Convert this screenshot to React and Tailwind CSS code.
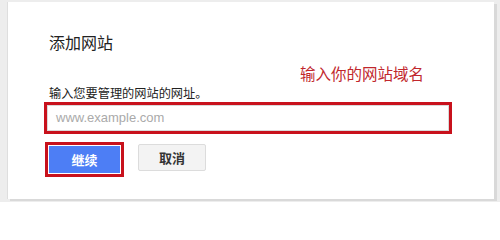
export default function App() {
  return (
    <div className="w-[500px] h-[202px] bg-[#ededed] pt-[2px] pl-[7px] font-['Noto_Sans_CJK_SC','Noto_Sans',sans-serif] overflow-hidden">
      <div className="relative w-[487px] h-[197px] bg-white border-l border-[#dedede] shadow-[3px_2px_0_#d9d9d9] px-[41px] pt-[30px]">
        <h1 className="text-[16px] leading-[20px] text-[#222] font-normal">添加网站</h1>
        <div className="absolute left-[292px] top-[62px] text-[15.5px] leading-[18px] text-[#c1272d]">
          输入你的网站域名
        </div>
        <div className="mt-[33px] text-[12.2px] leading-[16px] text-[#222]">输入您要管理的网站的网址。</div>
        <div className="mt-px -ml-[5px] w-[408px] border-[3px] border-[#c8111c] bg-white">
          <div className="h-[26px] border border-[#d9d9d9] pl-[8px] flex items-center text-[13px] text-[#aaaaaa] font-['Liberation_Sans',sans-serif]">
            www.example.com
          </div>
        </div>
        <div className="mt-[8px] flex items-start">
          <div className="-ml-[4px] border-[3px] border-[#c8111c] bg-white p-px">
            <div className="w-[71px] h-[27px] bg-[#4d7ef5] text-white text-[13px] font-bold flex items-center justify-center">
              继续
            </div>
          </div>
          <div className="ml-[14px] mt-[2px] w-[68px] h-[27px] bg-[#f3f3f3] border border-[#dcdcdc] rounded-[2px] text-[#333] text-[13px] font-bold flex items-center justify-center">
            取消
          </div>
        </div>
      </div>
    </div>
  );
}
